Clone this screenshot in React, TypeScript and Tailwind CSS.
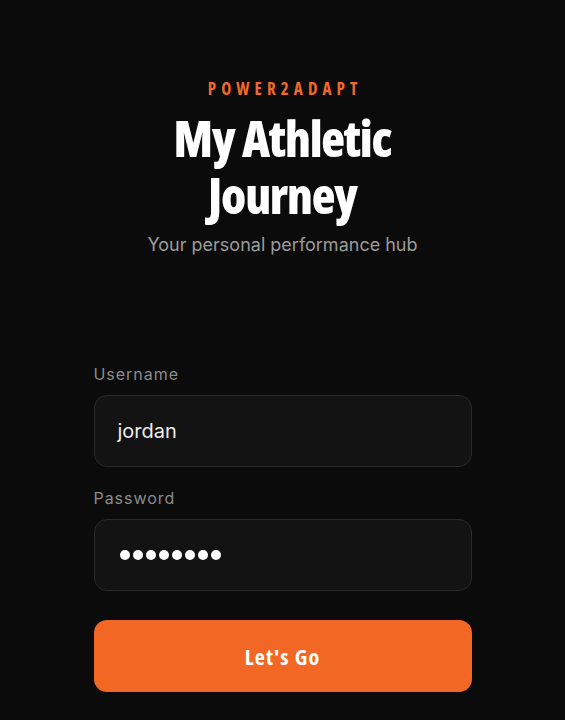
import React from "react";

export default function App() {
  return (
    <div className="min-h-[720px] w-full bg-[#0b0b0b] font-['Inter','Noto_Sans',sans-serif]">
      <div className="mx-auto w-[378px] pt-[78px]">
        <div className="flex flex-col items-center text-center">
          <div className="pl-[0.3em] font-['Open_Sans',sans-serif] font-stretch-condensed text-[17px] font-bold tracking-[0.3em] text-[#f26a2a] leading-[22px]">
            POWER2ADAPT
          </div>
          <h1 className="mt-[10px] flex flex-col font-['Open_Sans',sans-serif] font-stretch-condensed text-[49px] font-extrabold leading-[57px] tracking-[-0.025em] text-white">
            <span>My Athletic</span>
            <span>Journey</span>
          </h1>
          <p className="mt-[9px] text-[18px] leading-[24px] text-[#9b9b9b]">
            Your personal performance hub
          </p>
        </div>
        <div className="mt-[107px] flex flex-col">
          <label className="text-[16px] leading-[20px] tracking-[0.06em] text-[#8c8c8c]">Username</label>
          <div className="mt-[11px] flex h-[72px] items-center rounded-[13px] border border-[#2a2a2a] bg-[#131313] px-[23px] text-[20px] text-[#ececec]">
            jordan
          </div>
          <label className="mt-[21px] text-[16px] leading-[20px] tracking-[0.06em] text-[#8c8c8c]">Password</label>
          <div className="mt-[11px] flex h-[72px] items-center gap-[3px] rounded-[13px] border border-[#2a2a2a] bg-[#131313] px-[25px]">
            {Array.from({ length: 8 }).map((_, i) => (
              <span key={i} className="h-[10px] w-[10px] rounded-full bg-white" />
            ))}
          </div>
          <button className="mt-[29px] h-[72px] rounded-[13px] bg-[#f26724] font-['Open_Sans',sans-serif] font-stretch-condensed text-[22px] font-bold tracking-[0.05em] text-white">
            Let's Go
          </button>
        </div>
      </div>
    </div>
  );
}
